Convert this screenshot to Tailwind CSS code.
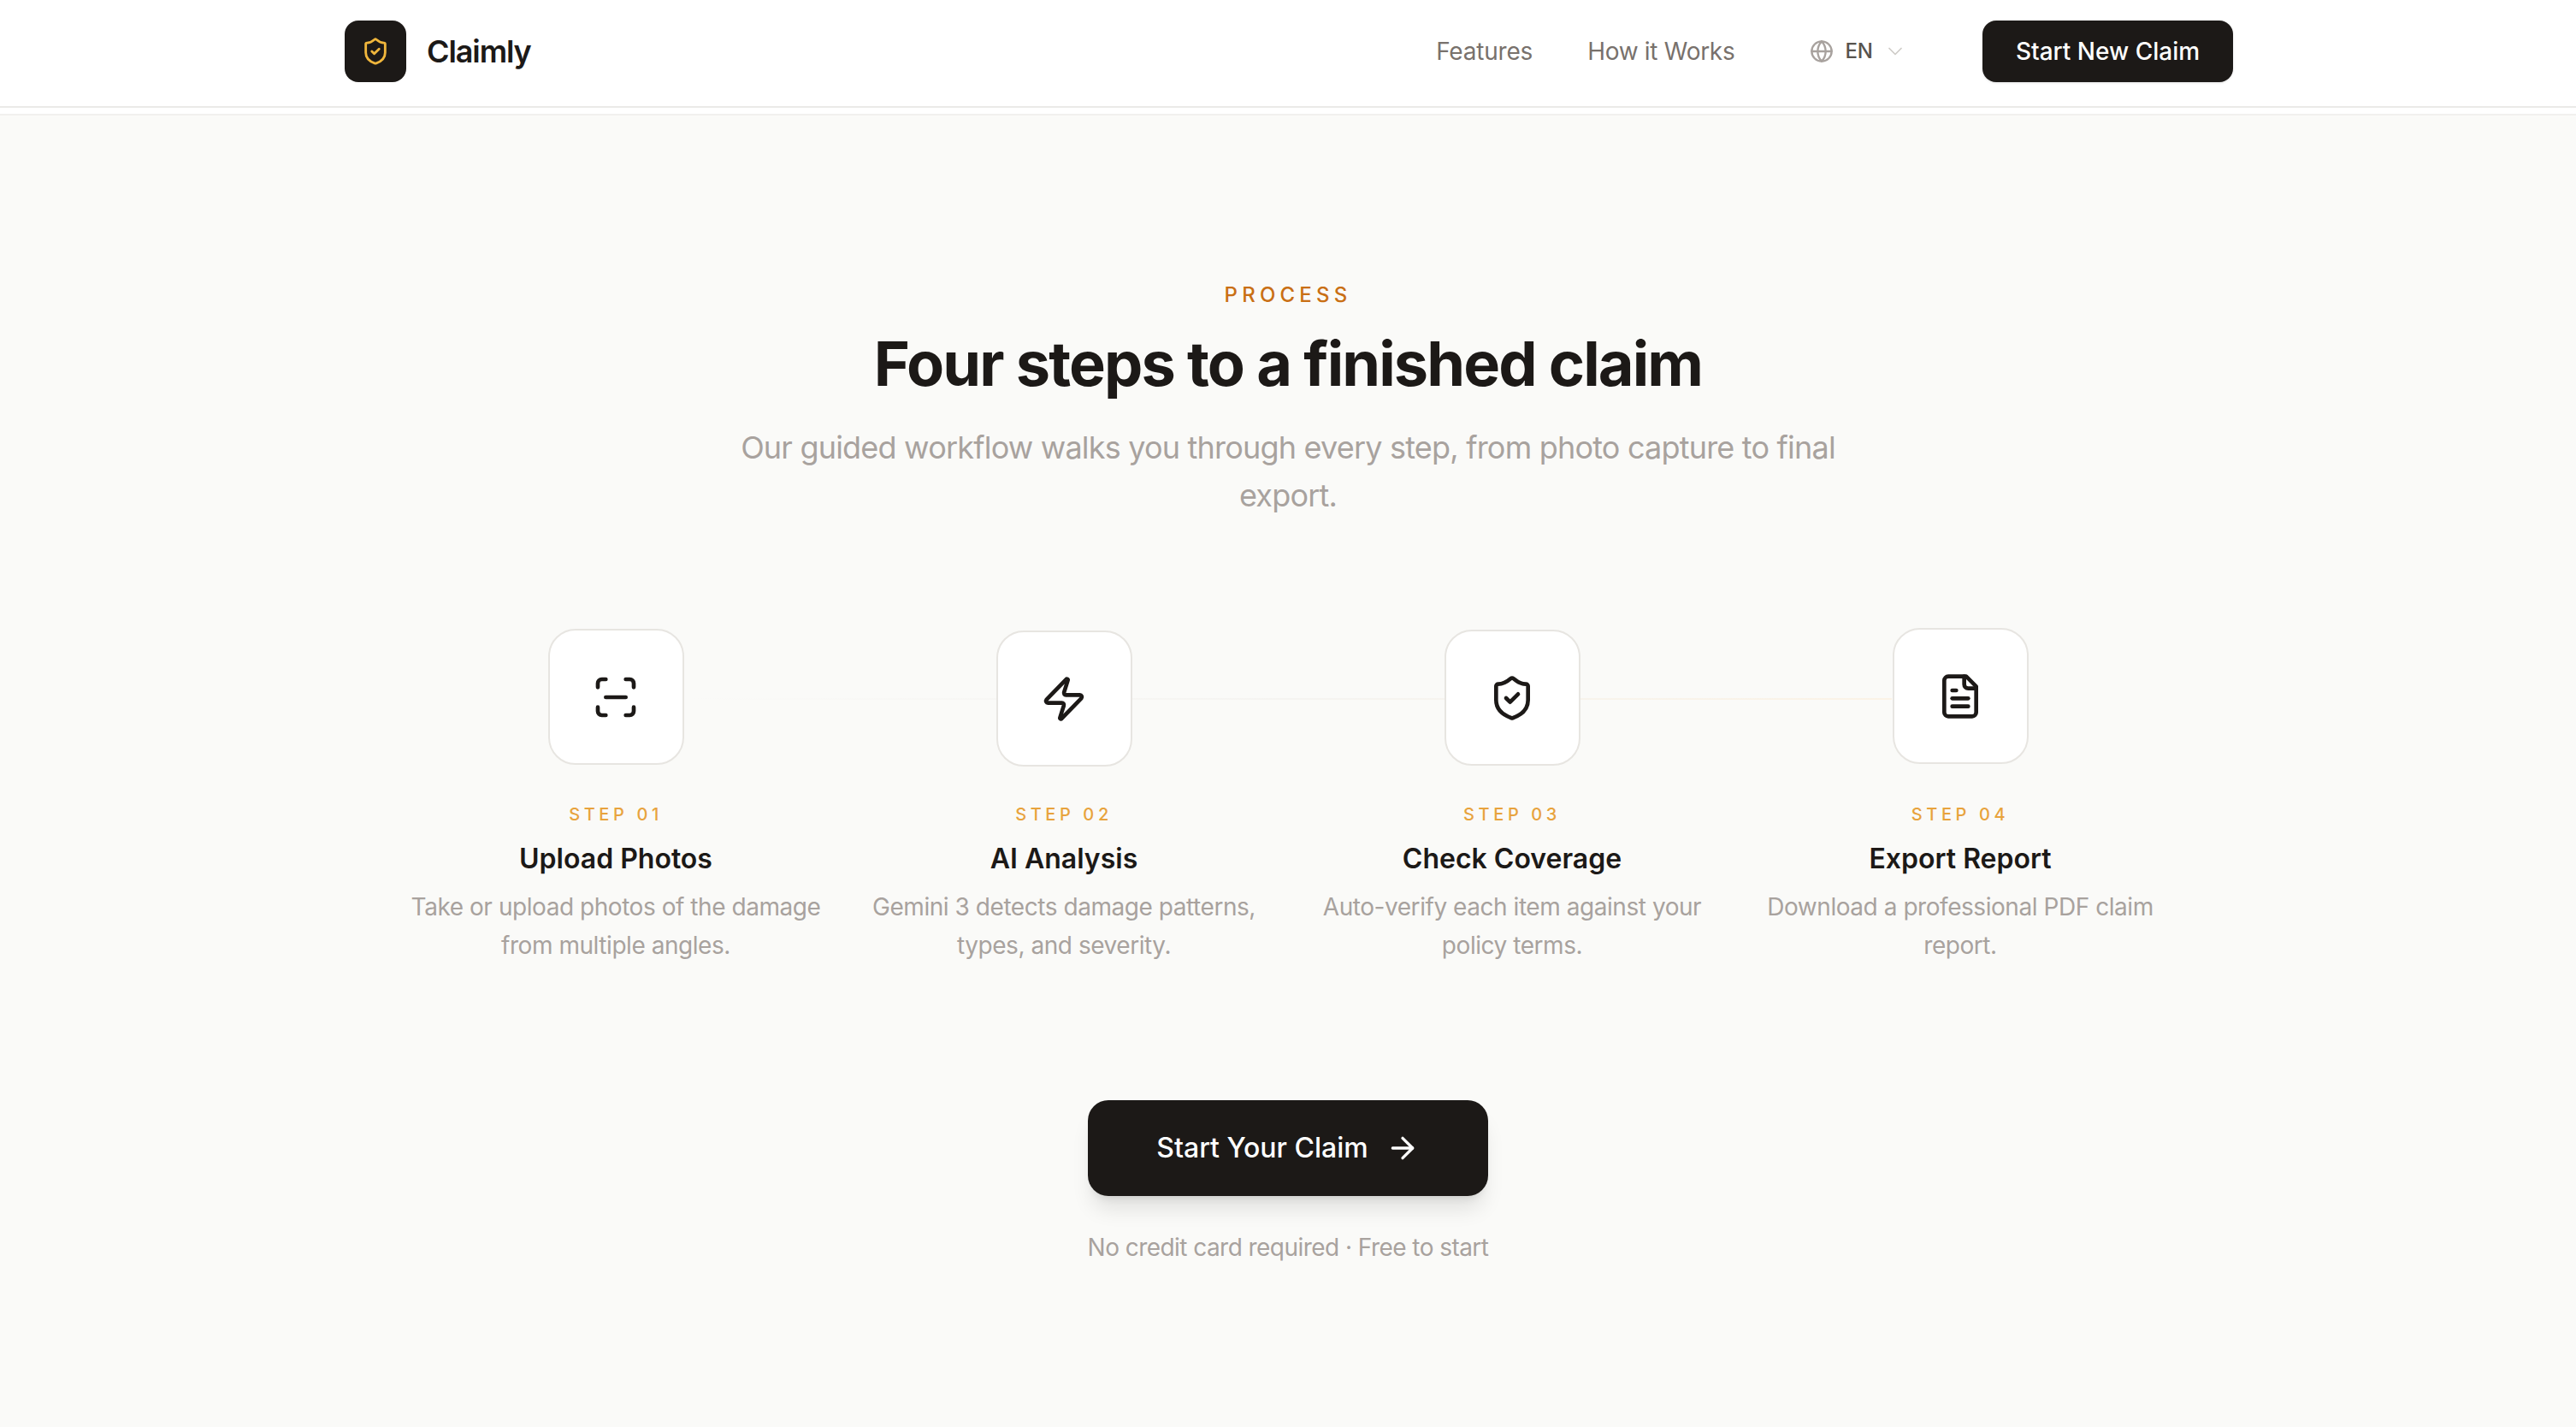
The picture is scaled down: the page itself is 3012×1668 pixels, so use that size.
<!DOCTYPE html>
<html lang="en">
<head>
    <meta charset="UTF-8">
    <title>Claimly</title>
    <script src="https://cdn.jsdelivr.net/npm/@tailwindcss/browser@4"></script>
</head>
<body class="bg-[#fafaf8] min-h-screen font-['Inter',sans-serif] text-[#1c1917] overflow-hidden">
    <header class="bg-white h-[135px] border-b-2 border-[#f1f0ee]">
        <div class="h-[126px] border-b-2 border-[#ebeae8]">
            <div class="w-[2208px] ml-[403px] h-[120px] flex items-center">
                <div class="w-[72px] h-[72px] rounded-2xl bg-[#1c1917] flex items-center justify-center">
                    <svg class="w-[34px] h-[34px]" viewBox="0 0 24 24" fill="none" stroke="#f0b63c" stroke-width="2" stroke-linecap="round" stroke-linejoin="round">
                        <path d="M20 13c0 5-3.5 7.5-7.66 8.95a1 1 0 0 1-.67-.01C7.5 20.5 4 18 4 13V6a1 1 0 0 1 1-1c2 0 4.5-1.2 6.24-2.72a1.17 1.17 0 0 1 1.52 0C14.51 3.81 17 5 19 5a1 1 0 0 1 1 1z"/>
                        <path d="m9 12 2 2 4-4"/>
                    </svg>
                </div>
                <span class="ml-6 text-[36px] font-semibold tracking-[-1.1px]">Claimly</span>
                <nav class="ml-auto flex items-center text-[28px] text-[#78716c]">
                    <a class="tracking-[-0.2px]">Features</a>
                    <a class="ml-16 tracking-[-0.3px]">How it Works</a>
                    <div class="ml-[88px] flex items-center">
                        <svg class="w-[28px] h-[28px]" viewBox="0 0 24 24" fill="none" stroke="#a8a29e" stroke-width="2" stroke-linecap="round" stroke-linejoin="round">
                            <circle cx="12" cy="12" r="10"/>
                            <path d="M12 2a14.5 14.5 0 0 0 0 20 14.5 14.5 0 0 0 0-20"/>
                            <path d="M2 12h20"/>
                        </svg>
                        <span class="ml-[13px] text-[24px] font-medium text-[#57534e]">EN</span>
                        <svg class="ml-[12px] w-[28px] h-[28px]" viewBox="0 0 24 24" fill="none" stroke="#cfccc8" stroke-width="1.5" stroke-linecap="round" stroke-linejoin="round">
                            <path d="m6 9 6 6 6-6"/>
                        </svg>
                    </div>
                    <button class="ml-[88px] w-[293px] h-[72px] rounded-2xl bg-[#1c1917] text-white font-medium text-[28px] shadow-sm">Start New Claim</button>
                </nav>
            </div>
        </div>
    </header>

    <main class="pt-[194px] flex flex-col items-center">
        <p class="text-[24px] leading-[32px] font-medium tracking-[5.2px] text-[#c96f14]">PROCESS</p>
        <h2 class="mt-[24px] text-[72px] leading-[80px] font-bold tracking-[-1.9px]">Four steps to a finished claim</h2>
        <p class="mt-[30px] w-[1344px] text-center text-[36px] leading-[56px] tracking-[-0.8px] text-[#a8a29e]">Our guided workflow walks you through every step, from photo capture to final export.</p>

        <div class="relative mt-[128px] w-[2048px] grid grid-cols-4 gap-12">
            <div class="absolute left-[318px] right-[318px] top-[81px] h-[2px] bg-gradient-to-r from-transparent via-[#f5f4f1] to-[#fbf3e6]"></div>

            <div class="relative flex flex-col items-center text-center">
                <div class="w-[159px] h-[159px] rounded-[32px] bg-white border-2 border-[#e7e5e1] flex items-center justify-center">
                    <svg class="w-[56px] h-[56px]" viewBox="0 0 24 24" fill="none" stroke="#1c1917" stroke-width="2" stroke-linecap="round" stroke-linejoin="round">
                        <path d="M3 7V5a2 2 0 0 1 2-2h2"/>
                        <path d="M17 3h2a2 2 0 0 1 2 2v2"/>
                        <path d="M21 17v2a2 2 0 0 1-2 2h-2"/>
                        <path d="M7 21H5a2 2 0 0 1-2-2v-2"/>
                        <path d="M7 12h10"/>
                    </svg>
                </div>
                <p class="mt-[44px] text-[20px] leading-[28px] font-medium tracking-[4.6px] text-[#e8a33d]">STEP 01</p>
                <h3 class="mt-[16px] text-[32px] leading-[44px] font-semibold">Upload Photos</h3>
                <p class="mt-[12px] w-[492px] text-[28px] leading-[45px] tracking-[-0.45px] text-[#a8a29e]">Take or upload photos of the damage from multiple angles.</p>
            </div>

            <div class="relative flex flex-col items-center text-center">
                <div class="translate-y-[2px] w-[159px] h-[159px] rounded-[32px] bg-white border-2 border-[#e7e5e1] flex items-center justify-center">
                    <svg class="w-[56px] h-[56px]" viewBox="0 0 24 24" fill="none" stroke="#1c1917" stroke-width="2" stroke-linecap="round" stroke-linejoin="round">
                        <path d="M4 14a1 1 0 0 1-.78-1.63l9.9-10.2a.5.5 0 0 1 .86.46l-1.92 6.02A1 1 0 0 0 13 10h7a1 1 0 0 1 .78 1.63l-9.9 10.2a.5.5 0 0 1-.86-.46l1.92-6.02A1 1 0 0 0 11 14z"/>
                    </svg>
                </div>
                <p class="mt-[44px] text-[20px] leading-[28px] font-medium tracking-[4.6px] text-[#e8a33d]">STEP 02</p>
                <h3 class="mt-[16px] text-[32px] leading-[44px] font-semibold">AI Analysis</h3>
                <p class="mt-[12px] w-[492px] text-[28px] leading-[45px] tracking-[-0.45px] text-[#a8a29e]">Gemini 3 detects damage patterns, types, and severity.</p>
            </div>

            <div class="relative flex flex-col items-center text-center">
                <div class="translate-y-[1px] w-[159px] h-[159px] rounded-[32px] bg-white border-2 border-[#e7e5e1] flex items-center justify-center">
                    <svg class="w-[56px] h-[56px]" viewBox="0 0 24 24" fill="none" stroke="#1c1917" stroke-width="2" stroke-linecap="round" stroke-linejoin="round">
                        <path d="M20 13c0 5-3.5 7.5-7.66 8.95a1 1 0 0 1-.67-.01C7.5 20.5 4 18 4 13V6a1 1 0 0 1 1-1c2 0 4.5-1.2 6.24-2.72a1.17 1.17 0 0 1 1.52 0C14.51 3.81 17 5 19 5a1 1 0 0 1 1 1z"/>
                        <path d="m9 12 2 2 4-4"/>
                    </svg>
                </div>
                <p class="mt-[44px] text-[20px] leading-[28px] font-medium tracking-[4.6px] text-[#e8a33d]">STEP 03</p>
                <h3 class="mt-[16px] text-[32px] leading-[44px] font-semibold">Check Coverage</h3>
                <p class="mt-[12px] w-[476px] text-[28px] leading-[45px] tracking-[-0.45px] text-[#a8a29e]">Auto-verify each item against your policy terms.</p>
            </div>

            <div class="relative flex flex-col items-center text-center">
                <div class="-translate-y-[1px] w-[159px] h-[159px] rounded-[32px] bg-white border-2 border-[#e7e5e1] flex items-center justify-center">
                    <svg class="w-[56px] h-[56px]" viewBox="0 0 24 24" fill="none" stroke="#1c1917" stroke-width="2" stroke-linecap="round" stroke-linejoin="round">
                        <path d="M15 2H6a2 2 0 0 0-2 2v16a2 2 0 0 0 2 2h12a2 2 0 0 0 2-2V7Z"/>
                        <path d="M14 2v4a2 2 0 0 0 2 2h4"/>
                        <path d="M10 9H8"/>
                        <path d="M16 13H8"/>
                        <path d="M16 17H8"/>
                    </svg>
                </div>
                <p class="mt-[44px] text-[20px] leading-[28px] font-medium tracking-[4.6px] text-[#e8a33d]">STEP 04</p>
                <h3 class="mt-[16px] text-[32px] leading-[44px] font-semibold">Export Report</h3>
                <p class="mt-[12px] w-[492px] text-[28px] leading-[45px] tracking-[-0.45px] text-[#a8a29e]">Download a professional PDF claim report.</p>
            </div>
        </div>

        <button class="mt-[158px] w-[468px] h-[112px] rounded-3xl bg-[#1c1917] text-white text-[32px] font-medium flex items-center justify-center shadow-xl shadow-black/10">
            Start Your Claim
            <svg class="ml-5 w-[40px] h-[40px]" viewBox="0 0 24 24" fill="none" stroke="#ffffff" stroke-width="2" stroke-linecap="round" stroke-linejoin="round">
                <path d="M5 12h14"/>
                <path d="m12 5 7 7-7 7"/>
            </svg>
        </button>
        <p class="mt-[40px] text-[28px] leading-[40px] tracking-[-0.55px] text-[#a8a29e]">No credit card required · Free to start</p>
    </main>
</body>
</html>
